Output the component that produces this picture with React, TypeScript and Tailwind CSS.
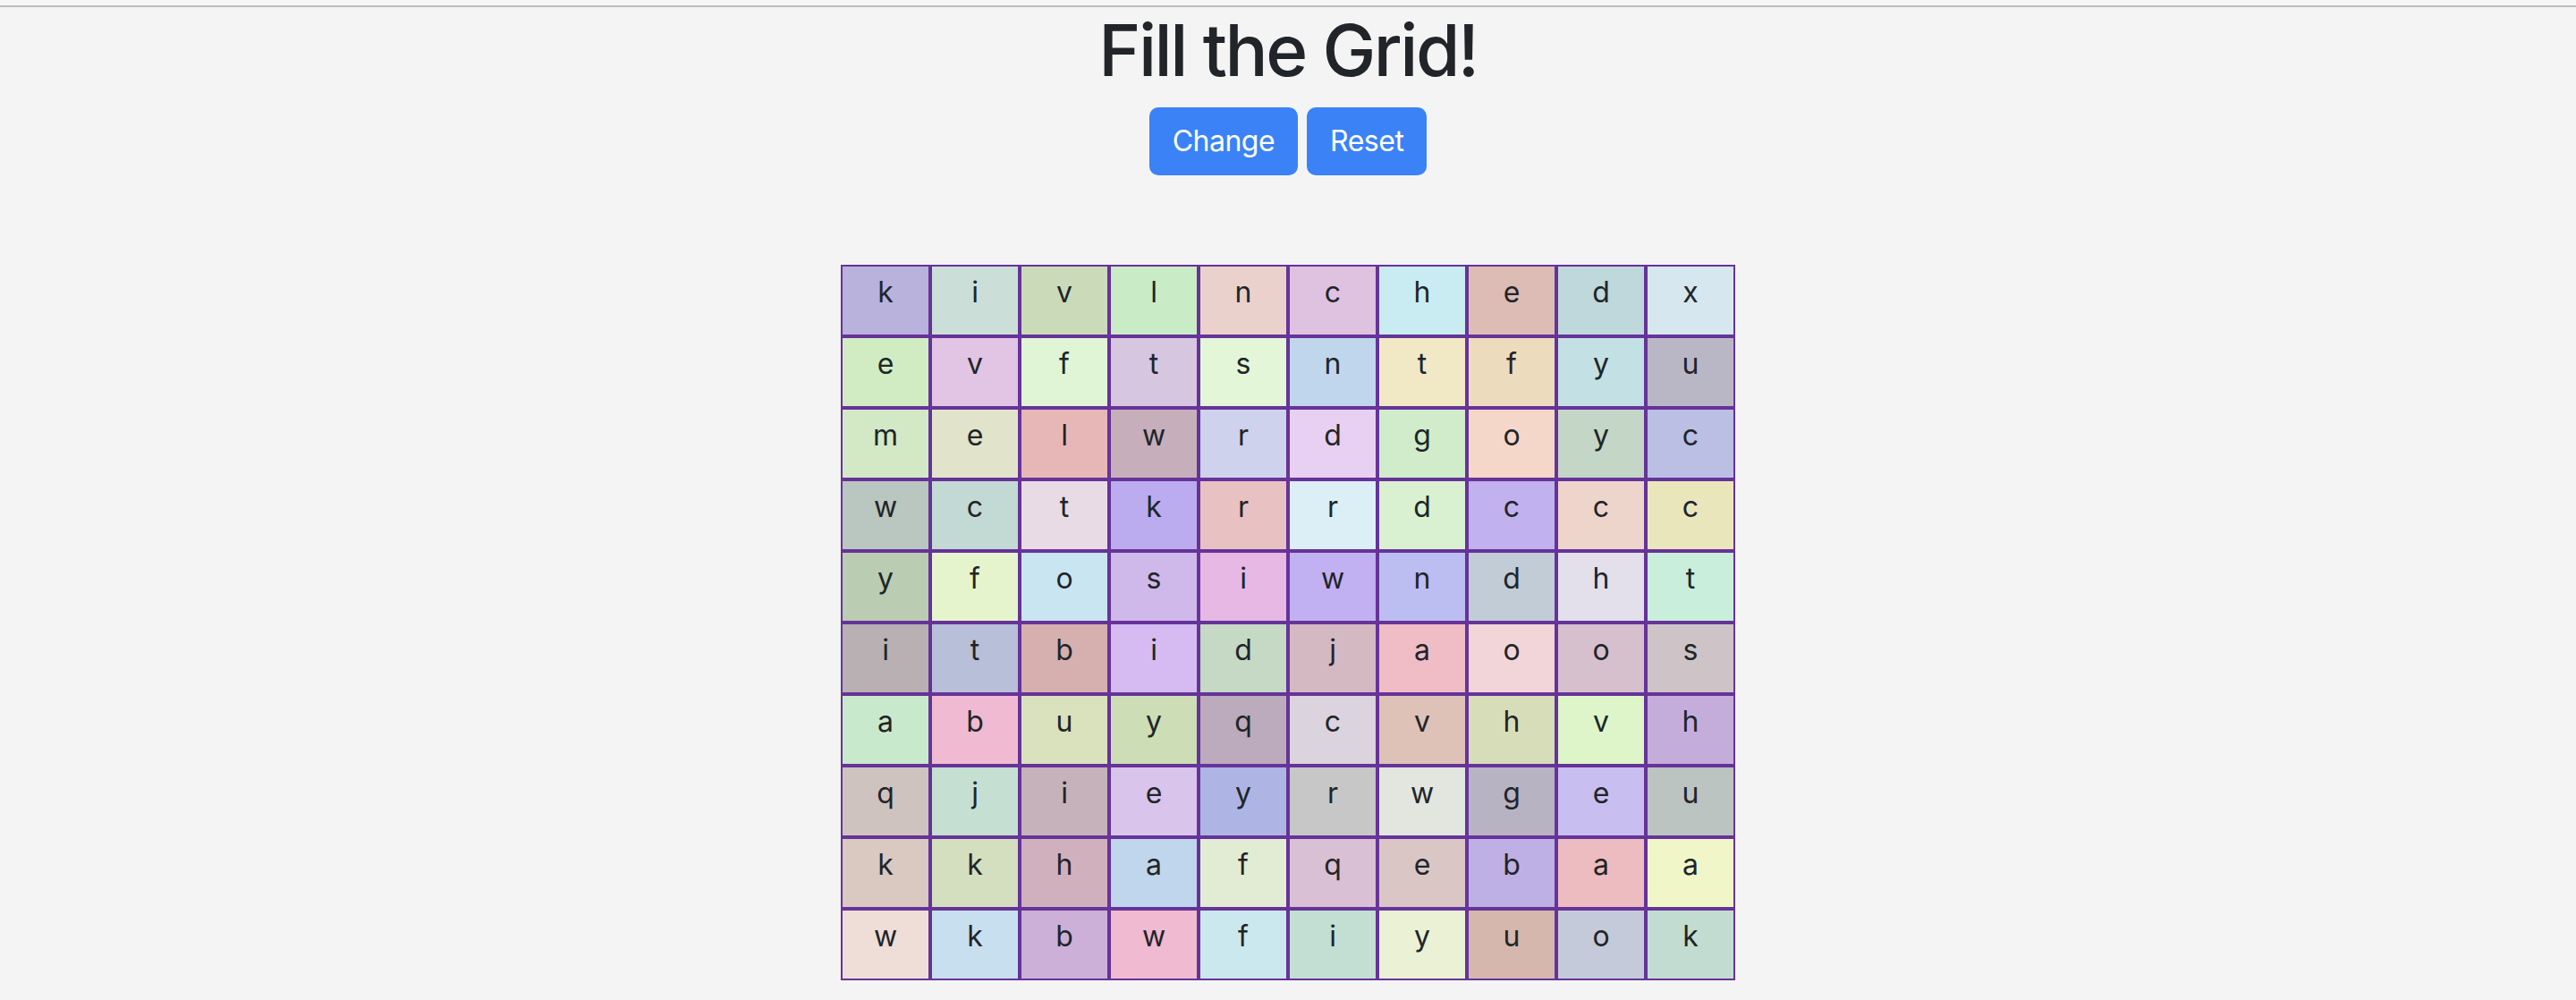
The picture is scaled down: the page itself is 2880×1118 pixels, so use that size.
import React from 'react';

const LETTERS = [
  'kivlnchedx',
  'evftsntfyu',
  'melwrdgoyc',
  'wctkrrdccc',
  'yfosiwndht',
  'itbidjaoos',
  'abuyqcvhvh',
  'qjieyrwgeu',
  'kkhafqebaa',
  'wkbwfiyuok',
];

const COLORS = [
  ['#b8b2dc', '#cbdfd8', '#cbdbba', '#c9ebc5', '#ebd1cc', '#dfc2e0', '#c8ecf1', '#dcbcb5', '#bed8dc', '#d6e7ef'],
  ['#d1ecc3', '#e2c4e4', '#e0f5d6', '#d7c6e0', '#e3f6d8', '#c0d6ec', '#f1e9c6', '#eddbbd', '#c3e1e4', '#b9b7c6'],
  ['#d3e9c6', '#e1e4cb', '#e7b7b8', '#c6afbb', '#cfd2ec', '#e7d0f1', '#d0ecca', '#f4d7c8', '#c4d7c7', '#babfe3'],
  ['#bac6c0', '#c3d9d3', '#e9dbe5', '#bbacef', '#e8c1c3', '#dceef6', '#d9f1d0', '#c1b1ee', '#edd5cc', '#eae6bc'],
  ['#bacdb2', '#e6f4cd', '#c9e5f2', '#cfb8ea', '#e6b8e3', '#c2b1f2', '#bcbdf0', '#c1ccd6', '#e3dfeb', '#c9eedc'],
  ['#b8b0b2', '#b8bfd8', '#d5b0af', '#d5bbf2', '#c5d9c5', '#d4b9c3', '#f0bcc6', '#f2d5d8', '#d6c0cd', '#cec3c7'],
  ['#c9e9cc', '#f0bad2', '#d9e2bd', '#cddeb7', '#bbabbc', '#dbd3dd', '#dec2b8', '#d7ddb8', '#ddf5c9', '#c5addb'],
  ['#cfc3bf', '#c5e0d2', '#c6b2ba', '#d9c4ec', '#aeb5e4', '#c7c7c7', '#e2e6df', '#b8b3c3', '#c8bef0', '#bbc4c1'],
  ['#d9c9c1', '#d3dfbf', '#d1b0bd', '#bfd6ec', '#e2ecd5', '#d9c0d4', '#dac7c5', '#beb0e4', '#edbcc0', '#f1f6c8'],
  ['#efddd7', '#c8dfef', '#ccb0d8', '#f0bad0', '#cbe8ef', '#c3dfd3', '#eaf1d5', '#d5b7ad', '#c4cad9', '#c3dcd1'],
];

function GridCell({ letter, color }: { letter: string; color: string }) {
  return (
    <div
      className="h-[80px] border-2 border-[#663399] flex justify-center pt-[5px] text-[32px] leading-[48px] text-[#212529]"
      style={{ backgroundColor: color }}
    >
      {letter}
    </div>
  );
}

export default function App() {
  return (
    <div className="min-h-screen bg-[#f4f4f4] font-['Inter',sans-serif]">
      <div className="h-[6px] bg-[#f6f6f6]" />
      <div className="h-[2px] bg-[#bcbcbc]" />

      <h1 className="text-center text-[80px] leading-[96px] font-medium tracking-[-2.5px] text-[#212529] mb-[16px]">
        Fill the Grid!
      </h1>

      <div className="flex justify-center gap-[10px]">
        <button className="h-[76px] px-[24px] border-2 border-[#3b82f6] bg-[#3b82f6] text-white text-[32px] leading-[48px] tracking-[-0.5px] rounded-[10px]">
          Change
        </button>
        <button className="h-[76px] px-[24px] border-2 border-[#3b82f6] bg-[#3b82f6] text-white text-[32px] leading-[48px] tracking-[-0.5px] rounded-[10px]">
          Reset
        </button>
      </div>

      <div className="mt-[100px] mx-auto w-[1000px] grid grid-cols-10">
        {LETTERS.map((row, r) =>
          row.split('').map((ch, c) => (
            <GridCell key={`${r}-${c}`} letter={ch} color={COLORS[r][c]} />
          ))
        )}
      </div>
    </div>
  );
}
